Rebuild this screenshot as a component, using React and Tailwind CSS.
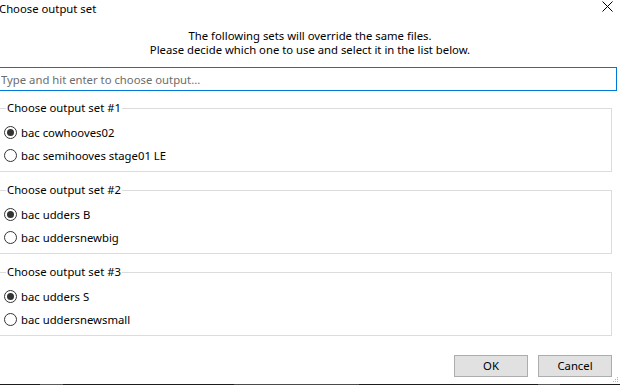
import { useState } from 'react';

const groups = [
  { title: 'Choose output set #1', options: ['bac cowhooves02', 'bac semihooves stage01 LE'] },
  { title: 'Choose output set #2', options: ['bac udders B', 'bac uddersnewbig'] },
  { title: 'Choose output set #3', options: ['bac udders S', 'bac uddersnewsmall'] },
];

function Radio({ checked, label, onSelect }) {
  return (
    <label className="h-[23px] flex items-center gap-[4px] pl-[5px] cursor-default" onClick={onSelect}>
      <span className="w-[13px] h-[13px] rounded-full border border-[#333333] bg-white flex items-center justify-center shrink-0">
        {checked && <span className="w-[7px] h-[7px] rounded-full bg-[#333333]" />}
      </span>
      <span>{label}</span>
    </label>
  );
}

export default function App() {
  const [picked, setPicked] = useState([0, 0, 0]);
  const [query, setQuery] = useState('');

  const choose = (g, i) => setPicked(p => p.map((v, k) => (k === g ? i : v)));

  return (
    <div className="w-[620px] h-[385px] overflow-hidden bg-white flex flex-col font-['Noto_Sans',sans-serif] text-[11.3px] leading-4 text-black">

      {/* Title bar */}
      <div className="h-[22px] shrink-0 flex items-start justify-between pt-[1px]">
        <span className="-ml-[1px]">Choose output set</span>
        <svg className="w-[11px] h-[11px] mr-[7px]" viewBox="0 0 11 11" fill="none" stroke="#000" strokeWidth="1">
          <path d="M0.5 0.5L10.5 10.5M10.5 0.5L0.5 10.5" />
        </svg>
      </div>

      {/* Message */}
      <div className="mt-[6px] text-center leading-[15px] flex flex-col">
        <p className="h-[14px]">The following sets will override the same files.</p>
        <p className="h-[15px]">Please decide which one to use and select it in the list below.</p>
      </div>

      {/* Filter */}
      <input
        type="text"
        value={query}
        onChange={e => setQuery(e.target.value)}
        placeholder="Type and hit enter to choose output..."
        className="mt-[10px] -ml-[1px] w-[618px] h-[24px] shrink-0 border border-[#0078d7] pl-[1px] outline-none placeholder:text-[#6d6d6d]"
      />

      {/* Output sets */}
      <div className="mt-[9px] flex flex-col gap-[10px]">
        {groups.map((g, gi) => (
          <fieldset key={g.title} className="-ml-[2px] w-[614px] border border-[#dcdcdc] pt-[5px] pb-[4px]">
            <legend className="ml-[7px] px-[1px] leading-4">{g.title}</legend>
            {g.options.map((o, oi) => (
              <Radio key={o} label={o} checked={picked[gi] === oi} onSelect={() => choose(gi, oi)} />
            ))}
          </fieldset>
        ))}
      </div>

      {/* Buttons */}
      <div className="mt-[19px] flex justify-end gap-[10px] pr-[8px]">
        <button className="w-[74px] h-[22px] bg-[#e1e1e1] border border-[#adadad]">OK</button>
        <button className="w-[74px] h-[22px] bg-[#e1e1e1] border border-[#adadad]">Cancel</button>
      </div>

      <div className="flex-1 flex justify-end items-end pr-[1px]">
        <svg className="w-[6px] h-[6px] mb-[1px]" viewBox="0 0 6 6" fill="#b4b4b4">
          <rect x="4" y="0" width="1" height="1" />
          <rect x="2" y="2" width="1" height="1" />
          <rect x="4" y="2" width="1" height="1" />
          <rect x="0" y="4" width="1" height="1" />
          <rect x="2" y="4" width="1" height="1" />
          <rect x="4" y="4" width="1" height="1" />
        </svg>
      </div>

      {/* Taskbar edge */}
      <div className="h-[2px] shrink-0 bg-[#1c1c1c] flex">
        <div className="ml-[40px] w-[23px] bg-[#5a5a5a]" />
        <div className="ml-[171px] w-[125px] bg-[#4a4a4a]" />
        <div className="ml-[179px] w-[22px] bg-[#5a5a5a]" />
      </div>
    </div>
  );
}
